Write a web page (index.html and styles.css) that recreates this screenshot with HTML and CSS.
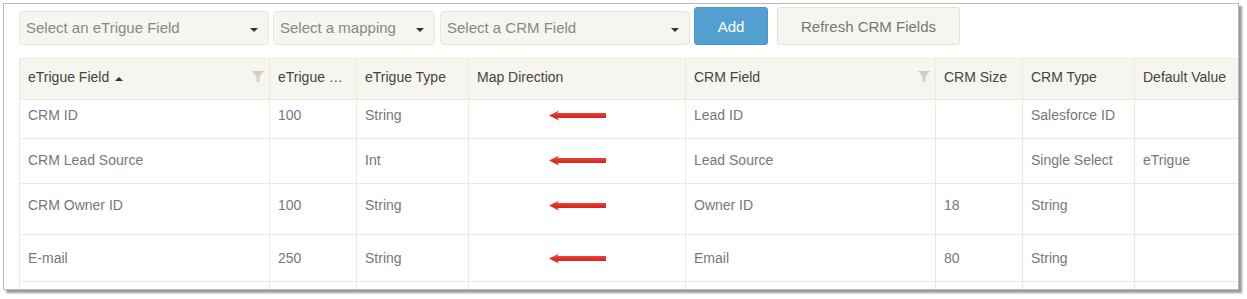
FILE: index.html
```html
<!DOCTYPE html>
<html>
<head>
<meta charset="utf-8">
<link rel="stylesheet" href="styles.css">
</head>
<body>
<div class="frame">
  <div class="toolbar">
    <div class="select w1"><span>Select an eTrigue Field</span><i class="caret"></i></div>
    <div class="select w2"><span>Select a mapping</span><i class="caret"></i></div>
    <div class="select w3"><span>Select a CRM Field</span><i class="caret"></i></div>
    <button class="btn add">Add</button>
    <button class="btn refresh">Refresh CRM Fields</button>
  </div>
  <table class="grid">
    <colgroup>
      <col class="c1"><col class="c2"><col class="c3"><col class="c4"><col class="c5"><col class="c6"><col class="c7"><col class="c8">
    </colgroup>
    <thead>
      <tr>
        <th><div class="hcell"><span>eTrigue Field <i class="sort"></i></span><svg class="filter" width="12" height="12" viewBox="0 0 12 12"><path d="M0 0H12L7.5 5.5V12L4.5 10V5.5Z" fill="#d3cec4"/></svg></div></th>
        <th>eTrigue …</th>
        <th>eTrigue Type</th>
        <th>Map Direction</th>
        <th><div class="hcell"><span>CRM Field</span><svg class="filter" width="12" height="12" viewBox="0 0 12 12"><path d="M0 0H12L7.5 5.5V12L4.5 10V5.5Z" fill="#d3cec4"/></svg></div></th>
        <th>CRM Size</th>
        <th>CRM Type</th>
        <th>Default Value</th>
      </tr>
    </thead>
    <tbody>
      <tr class="r1"><td>CRM ID</td><td>100</td><td>String</td><td class="dir"><div class="arr"><svg width="58" height="11" viewBox="0 0 58 11"><defs><linearGradient id="g" x1="0" y1="0" x2="0" y2="1"><stop offset="0" stop-color="#ec5f56"/><stop offset="0.5" stop-color="#e0302a"/><stop offset="1" stop-color="#c41d18"/></linearGradient></defs><path d="M0 5.5L10 0.5L8.5 3H57V8H8.5L10 10.5Z" fill="url(#g)"/></svg></div></td><td>Lead ID</td><td></td><td>Salesforce ID</td><td></td></tr>
      <tr class="r2"><td>CRM Lead Source</td><td></td><td>Int</td><td class="dir"><div class="arr"><svg width="58" height="11" viewBox="0 0 58 11"><path d="M0 5.5L10 0.5L8.5 3H57V8H8.5L10 10.5Z" fill="url(#g)"/></svg></div></td><td>Lead Source</td><td></td><td>Single Select</td><td>eTrigue</td></tr>
      <tr class="r3"><td>CRM Owner ID</td><td>100</td><td>String</td><td class="dir"><div class="arr"><svg width="58" height="11" viewBox="0 0 58 11"><path d="M0 5.5L10 0.5L8.5 3H57V8H8.5L10 10.5Z" fill="url(#g)"/></svg></div></td><td>Owner ID</td><td>18</td><td>String</td><td></td></tr>
      <tr class="r4"><td>E-mail</td><td>250</td><td>String</td><td class="dir"><div class="arr"><svg width="58" height="11" viewBox="0 0 58 11"><path d="M0 5.5L10 0.5L8.5 3H57V8H8.5L10 10.5Z" fill="url(#g)"/></svg></div></td><td>Email</td><td>80</td><td>String</td><td></td></tr>
      <tr class="r5"><td></td><td></td><td></td><td></td><td></td><td></td><td></td><td></td></tr>
    </tbody>
  </table>
</div>
</body>
</html>
```

FILE: styles.css
```css
* { box-sizing: border-box; }
html, body { margin: 0; padding: 0; background: #fff; }
body {
  font-family: "Liberation Sans", Arial, sans-serif;
  font-size: 14px;
  color: #777;
  width: 1247px;
  height: 299px;
  overflow: hidden;
}
.frame {
  margin: 3px 0 0 3px;
  width: 1236px;
  height: 287px;
  border: 1px solid #b9b9b9;
  box-shadow: 3px 3px 2px #9a9a9a;
  overflow: hidden;
  background: #fff;
}
.toolbar {
  display: flex;
  align-items: flex-end;
  padding: 0 0 0 15px;
  height: 41px;
}
.select {
  height: 34px;
  background: #f7f5ef;
  border: 1px solid #ebe7dc;
  border-radius: 4px;
  display: flex;
  align-items: center;
  justify-content: space-between;
  padding: 0 10px 1px 6px;
  color: #888;
  font-size: 15px;
}
.w1 { width: 250px; margin-right: 4px; }
.w2 { width: 162px; margin-right: 5px; }
.w3 { width: 250px; margin-right: 4px; }
.caret {
  width: 0; height: 0;
  border-left: 4px solid transparent;
  border-right: 4px solid transparent;
  border-top: 4px solid #333;
  margin-top: 4px;
}
.btn {
  height: 38px;
  border-radius: 3px;
  font-family: "Liberation Sans", Arial, sans-serif;
  font-size: 15px;
  padding: 0;
}
.add {
  width: 74px;
  background: #529fd0;
  border: 1px solid #4d97c8;
  color: #fff;
  margin-right: 9px;
}
.refresh {
  width: 183px;
  background: #f7f5ef;
  border: 1px solid #e6e2d6;
  color: #777;
}
.grid {
  margin: 13px 0 0 15px;
  border-collapse: collapse;
  table-layout: fixed;
  width: 1250px;
}
.c1 { width: 250px; }
.c2 { width: 87px; }
.c3 { width: 112px; }
.c4 { width: 217px; }
.c5 { width: 250px; }
.c6 { width: 87px; }
.c7 { width: 112px; }
.c8 { width: 135px; }
th, td {
  border: 1px solid #efe9dc;
  text-align: left;
  padding: 0 8px;
  font-weight: normal;
  white-space: nowrap;
  overflow: hidden;
}
th {
  background: #f7f5ef;
  color: #444;
  height: 41px;
  font-size: 14px;
  padding-bottom: 5px;
}
.hcell { display: flex; justify-content: space-between; align-items: center; }
.filter { margin-right: -3px; margin-top: 0; }
.sort {
  display: inline-block;
  width: 0; height: 0;
  border-left: 4px solid transparent;
  border-right: 4px solid transparent;
  border-bottom: 4px solid #333;
  margin-left: 2px;
  vertical-align: 1px;
}
td { color: #777; vertical-align: top; line-height: 16px; }
.r1 td { height: 39px; padding-top: 7px; }
.r2 td { height: 45px; padding-top: 13px; }
.r3 td { height: 51px; padding-top: 13px; }
.r4 td { height: 47px; padding-top: 15px; }
.r5 td { height: 20px; }
.dir { padding-left: 0; padding-right: 0; }
.arr { height: 16px; display: flex; align-items: center; justify-content: center; padding-left: 2px; }
```
